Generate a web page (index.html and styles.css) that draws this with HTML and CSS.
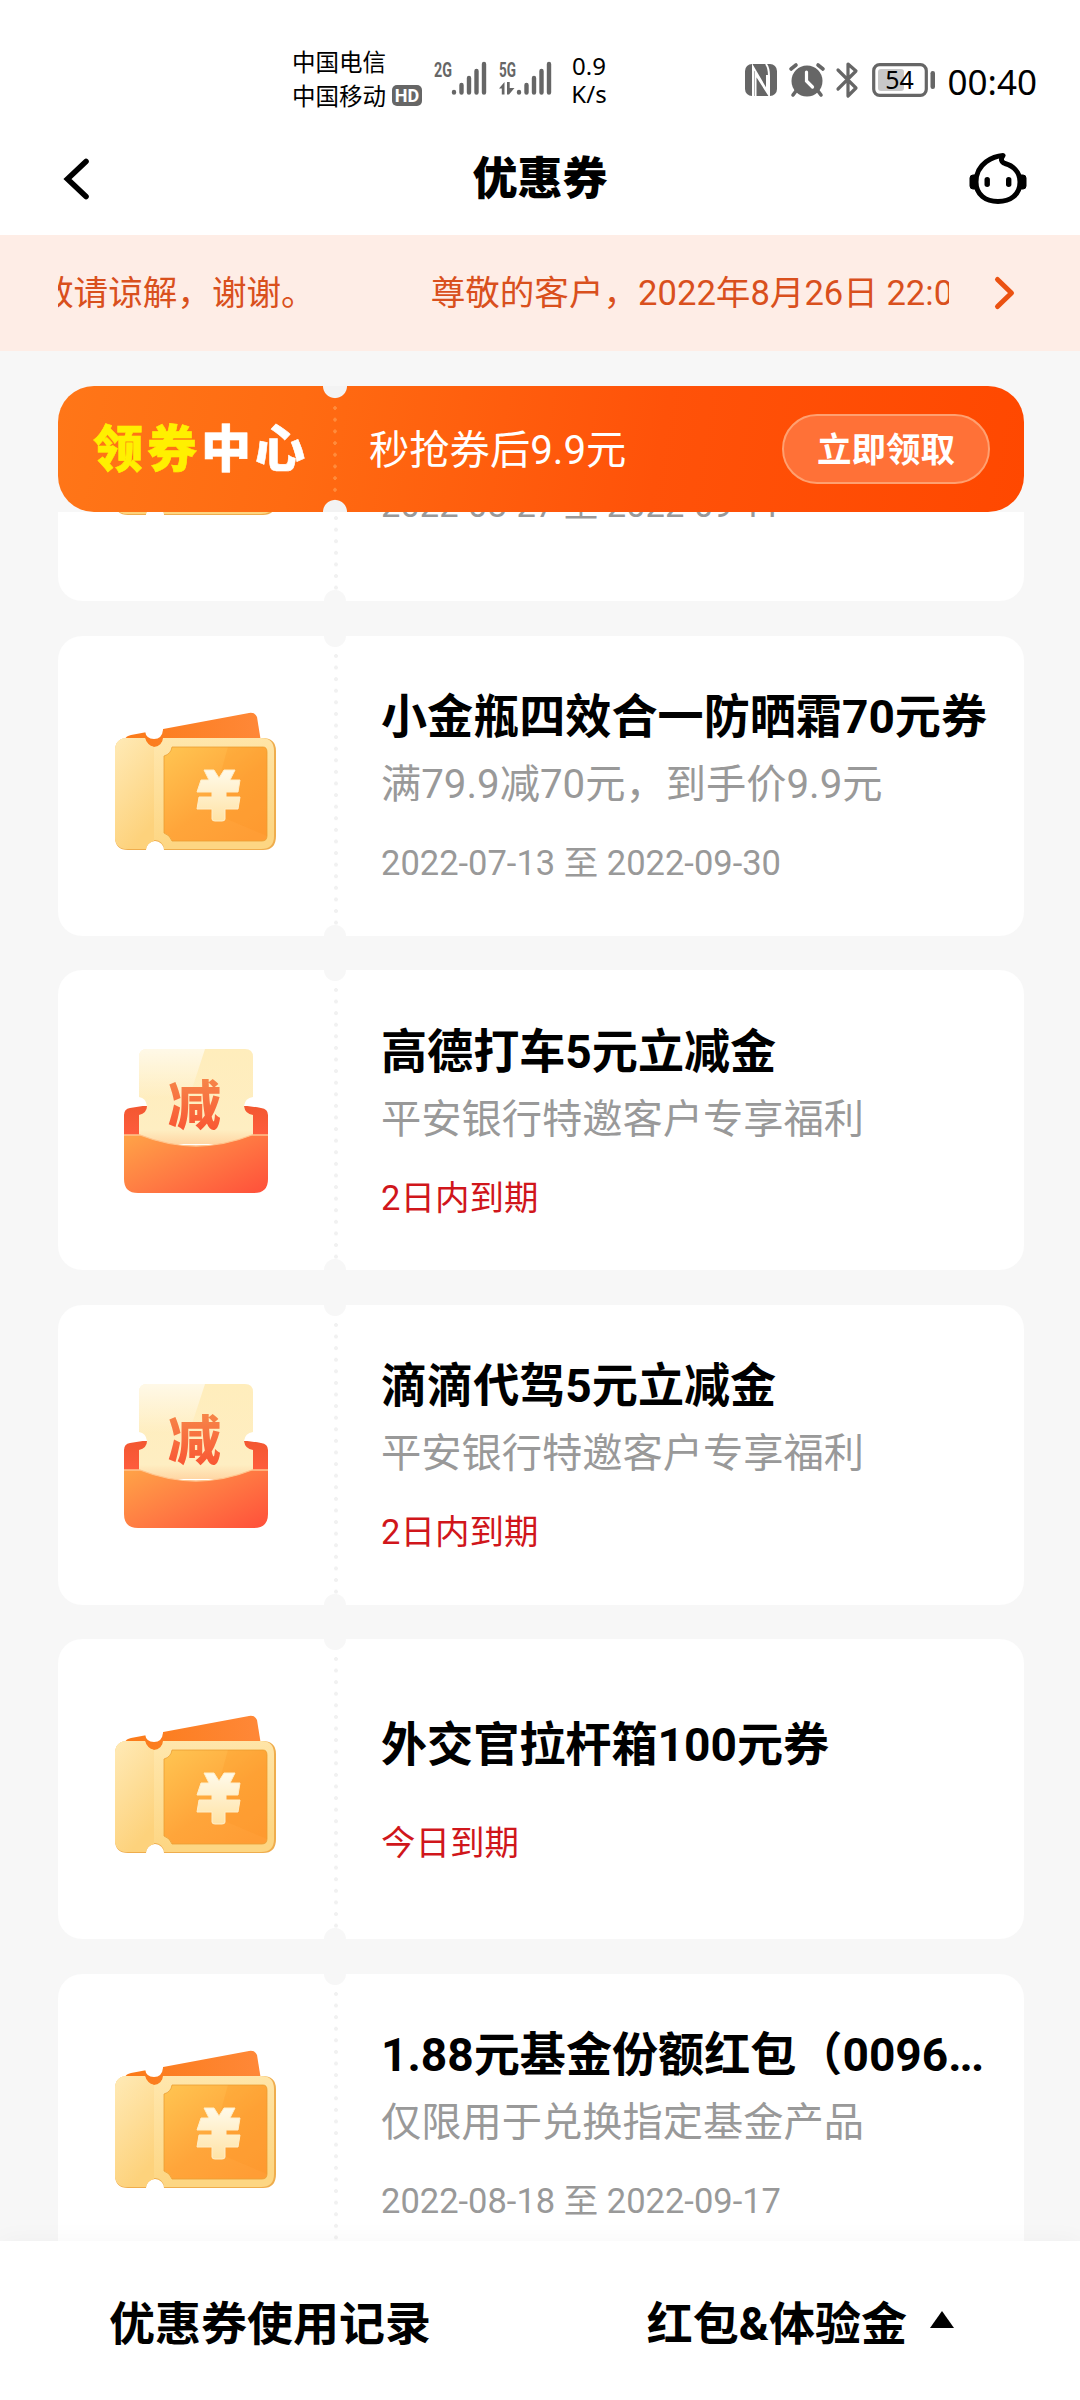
FILE: index.html
```html
<!DOCTYPE html>
<html lang="zh-CN">
<head>
<meta charset="utf-8">
<title>优惠券</title>
<link rel="stylesheet" href="styles.css">
</head>
<body>
<svg class="defs" width="0" height="0" aria-hidden="true">
  <defs>
    <linearGradient id="stub" x1="0" y1="0" x2="0.4" y2="1"><stop offset="0" stop-color="#ffeab6"/><stop offset="1" stop-color="#fdd27c"/></linearGradient>
    <linearGradient id="rim" x1="0" y1="0" x2="0.2" y2="1"><stop offset="0" stop-color="#ffe8b0"/><stop offset="1" stop-color="#fdd683"/></linearGradient>
    <linearGradient id="face" x1="0" y1="0" x2="0.8" y2="1"><stop offset="0" stop-color="#ffc552"/><stop offset="0.6" stop-color="#ffa53a"/><stop offset="1" stop-color="#ff9d35"/></linearGradient>
    <linearGradient id="back" x1="0" y1="0" x2="1" y2="0"><stop offset="0" stop-color="#fb7a18"/><stop offset="1" stop-color="#ff8838"/></linearGradient>
    <linearGradient id="yen" x1="0" y1="0" x2="0" y2="1"><stop offset="0" stop-color="#fffaea"/><stop offset="1" stop-color="#ffe3a6"/></linearGradient>
    <linearGradient id="pocket" x1="0" y1="0.1" x2="1" y2="0.9"><stop offset="0" stop-color="#ffa047"/><stop offset="0.5" stop-color="#ff7a43"/><stop offset="1" stop-color="#ff533b"/></linearGradient>
    <linearGradient id="flap" x1="0" y1="0" x2="0" y2="1"><stop offset="0" stop-color="#f1572f"/><stop offset="1" stop-color="#ff5c3d"/></linearGradient>
    <linearGradient id="slip" x1="0" y1="0" x2="0" y2="1"><stop offset="0" stop-color="#ffedbc"/><stop offset="0.85" stop-color="#feeec2"/><stop offset="1" stop-color="#ffd6a4"/></linearGradient>
    <linearGradient id="sheen" x1="0" y1="0" x2="0" y2="1"><stop offset="0" stop-color="#fff" stop-opacity="0.65"/><stop offset="1" stop-color="#fff" stop-opacity="0"/></linearGradient>
    <linearGradient id="ink" x1="0" y1="0" x2="0" y2="1"><stop offset="0" stop-color="#f5934f"/><stop offset="1" stop-color="#fa4e30"/></linearGradient>
    <symbol id="ticket" viewBox="0 0 164 140">
      <path d="M11 27 Q12 24 17 23 L135 1 Q141 0 143 5 L147 30 V36 H11Z" fill="url(#back)"/>
      <path d="M31 12 H49 V18 Q48 27 40 27 Q32 27 31 19Z" fill="#fff"/>
      <path d="M14 26 H31 A9 9 0 0 0 49 26 H148 Q162 26 162 39 V124 Q162 138 149 138 H50 A9 9 0 0 0 32 138 H14 Q1 138 1 125 V39 Q1 26 14 26Z" fill="#efad4d"/>
      <path d="M14 26 H31 A9 9 0 0 0 49 26 H147 Q160 26 160 39 V124 Q160 137 147 137 H50 A9 9 0 0 0 32 137 H14 Q1 137 1 124 V39 Q1 26 14 26Z" fill="url(#rim)"/>
      <path d="M14 26 H31 Q33 33 40 35 V129 Q33 131 32 137 H14 Q1 137 1 124 V39 Q1 26 14 26Z" fill="url(#stub)"/>
      <path d="M32 130 H50 V139 H32Z" fill="none"/>
      <path d="M58 35 H149 Q153 35 153 40 V124 Q153 129 148 129 H58 Q56 123 50 121 V44 Q57 42 58 35Z" fill="url(#face)" stroke="#eba033" stroke-width="0.8"/>
      <path d="M114 35 H149 Q153 35 153 40 V124 L96 100Z" fill="#f98f20" opacity="0.2"/>
      <path d="M90 58 H100 L105 66 L110 58 H121 L116 68 H126 L124 80 H112 V85 H126 L124 97 H111 V107 Q111 109 108 109 H101 Q98 109 98 107 V97 H83 L85 85 H98 V80 H83 L87 68 H95Z" fill="url(#yen)" stroke="#ffeec8" stroke-width="1" stroke-linejoin="round"/>
    </symbol>
    <symbol id="voucher" viewBox="0 0 146 146">
      <path d="M1 88 V67 Q1 61 7 60 Q70 48 138 60 Q145 61 145 67 V88Z" fill="url(#flap)"/>
      <path d="M16 40 H25 V58 H16Z M121 40 H131 V58 H121Z" fill="#fff"/>
      <path d="M16 88 V67 Q24 65 24 58 Q23 50 16 49 V9 Q16 1 24 1 H122 Q130 1 130 9 V49 Q122 50 121 58 Q122 66 130 67 V88 L118 96 H30Z" fill="url(#slip)"/>
      <path d="M16 49 V9 Q16 1 24 1 H82 L66 50 H16Z" fill="url(#sheen)"/>
      <text x="45" y="77" class="voucher-mark">减</text>
      <path d="M1 87 H17 Q73 109 129 87 H145 V131 Q145 145 131 145 H15 Q1 145 1 131Z" fill="url(#pocket)"/>
      <path d="M1 87 H17 Q73 109 129 87 H145" fill="none" stroke="#ffc48d" stroke-width="1.3"/>
    </symbol>
  </defs>
</svg>

<div class="phone">
  <div class="status">
    <div class="carriers">
      <div class="carrier">中国电信</div>
      <div class="carrier">中国移动<span class="hd">HD</span></div>
    </div>
    <svg class="signal" viewBox="0 0 54 36">
      <text x="0" y="16" textLength="18" lengthAdjust="spacingAndGlyphs" class="net">2G</text>
      <g stroke="#666" stroke-width="4.4" stroke-linecap="round"><path d="M20 31V31.5M27.5 24V31.5M35 17V31.5M42.5 10V31.5M50 3V31.5"/></g>
    </svg>
    <svg class="signal signal-5g" viewBox="0 0 54 36">
      <text x="0" y="16" textLength="17" lengthAdjust="spacingAndGlyphs" class="net">5G</text>
      <path d="M0 27.5L5.500 21V33.500H2.800V27.500ZM8 21H10.700V27H15.500L10 33.500H8Z" fill="#666"/>
      <g stroke="#666" stroke-width="4.400" stroke-linecap="round"><path d="M20 31V31.500M27.500 24V31.500M35 17V31.500M42.500 10V31.500M50 3V31.500"/></g>
    </svg>
    <div class="speed"><span>0.9</span><span>K/s</span></div>
    <div class="status-right">
      <svg class="nfc" viewBox="0 0 32 32"><rect width="32" height="32" rx="7" fill="#666"/><path d="M8 32V3L22 27V11M10.500 32V10L24 31V12Q24 4 21 0" fill="none" stroke="#fff" stroke-width="2"/></svg>
      <svg class="alarm" viewBox="0 0 36 34"><circle cx="18" cy="18" r="15.500" fill="#666"/><path d="M2 6L7 2M34 6L29 2M7 28L4 32M29 28L32 32" stroke="#666" stroke-width="3.600" stroke-linecap="round"/><path d="M17.500 9V18L23.500 24" fill="none" stroke="#fff" stroke-width="3.200" stroke-linecap="round"/></svg>
      <svg class="bt" viewBox="0 0 22 36"><path d="M2 8L20 26L12 34V2L20 9L2 27" fill="none" stroke="#666" stroke-width="3.200" stroke-linejoin="round" stroke-linecap="round"/></svg>
      <svg class="battery" viewBox="0 0 64 34"><rect x="1.700" y="1.700" width="52.600" height="30.600" rx="6" fill="none" stroke="#666" stroke-width="3.200"/><rect x="6" y="6" width="26" height="22" rx="3" fill="#c8c8c8"/><rect x="58.500" y="8" width="4.500" height="18" rx="2.200" fill="#666"/><text x="27.500" y="26" text-anchor="middle" class="level">54</text></svg>
      <span class="clock">00:40</span>
    </div>
  </div>

  <header class="header">
    <svg class="back" viewBox="0 0 40 48"><path d="M28 6.500L9.500 24L28 41.500" fill="none" stroke="#000" stroke-width="5.600" stroke-linecap="round"/></svg>
    <h1 class="page-title">优惠券</h1>
    <svg class="service" viewBox="0 0 58 52"><path d="M34 2.500C25 3 7 10 7 29C7 42 17 48.500 29 48.500C41 48.500 51 42 51 29C51 18 43 12.500 36 10.500C32 9 31.500 6 34 2.500Z" fill="none" stroke="#000" stroke-width="5" stroke-linejoin="round"/><path d="M6 22H4Q1 22 1 25V33Q1 36 4 36H6ZM52 22H54Q57 22 57 25V33Q57 36 54 36H52Z" fill="#000" stroke="#000"/><rect x="15.500" y="24" width="5.400" height="10" rx="2.700"/><rect x="37" y="24" width="5.400" height="10" rx="2.700"/></svg>
  </header>

  <div class="notice">
    <div class="marquee"><span class="marquee-old">敬请谅解，谢谢。</span><span>尊敬的客户，2022年8月26日 22:00</span></div>
    <svg class="more" viewBox="0 0 24 36"><path d="M4.500 4.500L18.500 18L4.500 31.500" fill="none" stroke="#eb5212" stroke-width="5" stroke-linecap="round" stroke-linejoin="round"/></svg>
  </div>

  <div class="promo-area">
    <div class="promo">
      <div class="promo-name"><span class="gold">领券</span>中心</div>
      <div class="promo-text">秒抢券后9.9元</div>
      <div class="promo-button">立即领取</div>
    </div>
  </div>

  <main class="viewport">
    <div class="list">
      <article class="card">
        <div class="art"><svg class="ticket"><use href="#ticket"/></svg></div>
        <div class="info"><h2 class="name"></h2><p class="date">2022-08-27 至 2022-09-11</p></div>
      </article>
      <article class="card">
        <div class="art"><svg class="ticket"><use href="#ticket"/></svg></div>
        <div class="info"><h2 class="name">小金瓶四效合一防晒霜70元券</h2><p class="desc">满79.9减70元，到手价9.9元</p><p class="date">2022-07-13 至 2022-09-30</p></div>
      </article>
      <article class="card">
        <div class="art"><svg class="voucher"><use href="#voucher"/></svg></div>
        <div class="info"><h2 class="name">高德打车5元立减金</h2><p class="desc">平安银行特邀客户专享福利</p><p class="date urgent">2日内到期</p></div>
      </article>
      <article class="card">
        <div class="art"><svg class="voucher"><use href="#voucher"/></svg></div>
        <div class="info"><h2 class="name">滴滴代驾5元立减金</h2><p class="desc">平安银行特邀客户专享福利</p><p class="date urgent">2日内到期</p></div>
      </article>
      <article class="card">
        <div class="art"><svg class="ticket"><use href="#ticket"/></svg></div>
        <div class="info"><h2 class="name">外交官拉杆箱100元券</h2><p class="date urgent">今日到期</p></div>
      </article>
      <article class="card">
        <div class="art"><svg class="ticket"><use href="#ticket"/></svg></div>
        <div class="info"><h2 class="name">1.88元基金份额红包（0096<span class="dots">...</span></h2><p class="desc">仅限用于兑换指定基金产品</p><p class="date">2022-08-18 至 2022-09-17</p></div>
      </article>
    </div>
  </main>

  <nav class="tabs">
    <div class="tab">优惠券使用记录</div>
    <div class="tab tab-red">红包&amp;体验金<span class="caret"></span></div>
  </nav>
</div>
</body>
</html>
```

FILE: styles.css
```css
* { box-sizing: border-box; margin: 0; padding: 0; }

body {
  width: 1080px;
  background: #fff;
  color: #000;
  font-family: Roboto, "Noto Sans CJK SC", sans-serif;
}

svg { display: block; flex: none; overflow: visible; }
.defs { position: absolute; }

.phone {
  display: flex;
  flex-direction: column;
  width: 1080px;
  height: 2400px;
  overflow: hidden;
}

/* Status bar */
.status {
  display: flex;
  height: 130px;
  padding: 44px 43px 0 292px;
  flex: none;
}
.carriers { width: 142px; }
.carrier {
  display: flex;
  align-items: center;
  height: 34px;
  font-size: 23.5px;
  line-height: 34px;
  font-family: "Noto Sans CJK SC", sans-serif;
}
.hd {
  width: 30px;
  height: 21px;
  margin-left: 6px;
  border-radius: 5px;
  background: #666;
  color: #fff;
  font: bold 18px/21px Roboto, sans-serif;
  text-align: center;
}
.signal { width: 54px; height: 36px; margin-top: 17px; }
.signal-5g { margin-left: 11px; }
.net { font: bold 20px Roboto, sans-serif; fill: #666; }
.speed {
  display: flex;
  flex-direction: column;
  width: 50px;
  margin: 8px 0 0 11px;
  font: 24px/28px "Noto Sans", sans-serif;
  text-align: center;
}
.status-right { display: flex; margin-left: auto; }
.nfc { width: 32px; height: 32px; margin-top: 20px; }
.alarm { width: 36px; height: 34px; margin: 19px 0 0 12px; }
.bt { width: 22px; height: 36px; margin: 18px 0 0 11px; }
.battery { width: 64px; height: 34px; margin: 19px 0 0 14px; }
.level { font: 25px "Noto Sans", sans-serif; }
.clock { margin: 15px 0 0 12px; font: 35px/46px "Noto Sans", sans-serif; }

/* Title bar */
.header {
  display: flex;
  align-items: center;
  justify-content: space-between;
  flex: none;
  height: 105px;
  padding: 0 53px 8px 58px;
}
.back { width: 40px; height: 48px; }
.page-title { padding: 3px 0 0 13px; font-size: 45px; line-height: 60px; font-weight: 900; }
.service { width: 58px; height: 52px; }

/* Scrolling notice */
.notice {
  display: flex;
  align-items: center;
  flex: none;
  height: 116px;
  padding-left: 58px;
  background: #feede6;
}
.marquee {
  display: flex;
  gap: 115px;
  width: 891px;
  overflow: hidden;
  color: #d9501d;
  font-size: 34.6px;
  line-height: 50px;
  white-space: nowrap;
}
.marquee-old { margin-left: -19px; }
.more { width: 24px; height: 36px; margin-left: 44px; }

/* Promotion strip */
.promo-area { flex: none; height: 161px; padding: 35px 56px 0 58px; background: #f7f7f7; }
.promo {
  position: relative;
  display: flex;
  align-items: center;
  height: 126px;
  padding: 0 34px 0 35px;
  border-radius: 36px;
  background: linear-gradient(100deg, #ff7618 0%, #ff6b12 25%, #ff5209 62%, #ff4800 100%);
  color: #fff;
}
.promo::before {
  content: "";
  position: absolute;
  inset: 0;
  background:
    radial-gradient(circle at 277px 0, #f3f3f3 11.5px, transparent 12.5px),
    radial-gradient(circle at 277px 126px, #f3f3f3 11.5px, transparent 12.5px),
    radial-gradient(circle at 2px 2px, #ff8c3c 1.5px, transparent 2px) 275px 20px / 4px 11.7px repeat-y;
  clip-path: inset(0);
}
.promo-name {
  width: 277px;
  padding-top: 2px;
  font-size: 50px;
  line-height: 60px;
  font-weight: 900;
  letter-spacing: 4px;
  -webkit-text-stroke: 0.6px currentColor;
}
.gold { color: #fff000; }
.promo-text { flex: 1; margin-left: -1px; padding-top: 3px; font-size: 40.3px; line-height: 60px; }
.promo-button {
  width: 208px;
  height: 70px;
  border: 2px solid #ffa070;
  border-radius: 35px;
  background: #ff7137;
  font-size: 34.5px;
  line-height: 68px;
  font-weight: 700;
  text-align: center;
}

/* Coupon list, scrolled part-way through its first card */
.viewport { flex: 1; min-height: 0; overflow: hidden; background: #f7f7f7; }
.list {
  display: flex;
  flex-direction: column;
  gap: 34.5px;
  margin-top: -211px;
  padding: 0 56px 0 58px;
}
.card {
  display: flex;
  flex: none;
  height: 300px;
  border-radius: 24px;
  background:
    radial-gradient(circle at 277px 0, #f7f7f7 10.5px, transparent 11.5px),
    radial-gradient(circle at 277px 300px, #f7f7f7 10.5px, transparent 11.5px),
    radial-gradient(circle at 2px 2px, #f1f1f1 1.8px, transparent 2.2px) 276px 18px / 4px 11.6px repeat-y,
    #fff;
}
.art { display: flex; justify-content: center; width: 276px; padding-top: 76px; }
.ticket { width: 164px; height: 140px; }
.voucher { width: 146px; height: 146px; margin-top: 2px; }
.voucher-mark { font: 900 53px "Noto Sans CJK SC", sans-serif; fill: url(#ink); }
.info {
  display: flex;
  flex-direction: column;
  justify-content: center;
  padding: 0 0 5px 47px;
  white-space: nowrap;
}
.name { height: 88px; font-size: 46.1px; line-height: 88px; font-weight: 700; }
.dots { letter-spacing: -2px; }
.desc { color: #999; font-size: 40.25px; line-height: 48px; }
.date { margin-top: 24px; color: #999; font-size: 34.5px; line-height: 60px; }
.urgent { color: #d0161b; }

/* Bottom actions */
.tabs {
  position: relative;
  display: flex;
  flex: none;
  height: 159px;
  background: #fff;
  box-shadow: 0 0 24px rgba(0, 0, 0, 0.04);
}
.tab {
  display: flex;
  align-items: center;
  justify-content: center;
  width: 540px;
  height: 157px;
  font-size: 46px;
  font-weight: 700;
}
.tab-red { padding-right: 19px; }
.caret {
  margin-left: 23px;
  border: solid transparent;
  border-width: 0 12px 17px;
  border-bottom-color: #000;
}
```
